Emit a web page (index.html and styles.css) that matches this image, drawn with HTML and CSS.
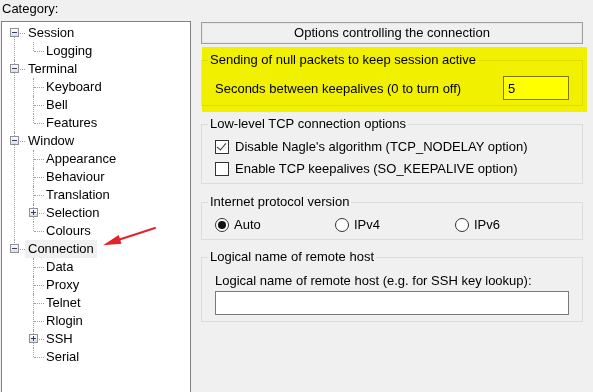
FILE: index.html
```html
<!DOCTYPE html>
<html lang="en">
<head>
    <meta charset="UTF-8">
    <title>Connection settings</title>
    <link rel="stylesheet" href="styles.css">
</head>
<body>
    <div class="left">
        <div class="cat-label">Category:</div>
        <div class="tree-box">
            <ul class="tree">
                <li><span class="toggle"></span><span class="label">Session</span>
                    <ul>
                        <li><span class="label">Logging</span></li>
                    </ul>
                </li>
                <li><span class="toggle"></span><span class="label">Terminal</span>
                    <ul>
                        <li><span class="label">Keyboard</span></li>
                        <li><span class="label">Bell</span></li>
                        <li><span class="label">Features</span></li>
                    </ul>
                </li>
                <li><span class="toggle"></span><span class="label">Window</span>
                    <ul>
                        <li><span class="label">Appearance</span></li>
                        <li><span class="label">Behaviour</span></li>
                        <li><span class="label">Translation</span></li>
                        <li><span class="toggle plus"></span><span class="label">Selection</span></li>
                        <li><span class="label">Colours</span></li>
                    </ul>
                </li>
                <li><span class="toggle"></span><span class="label selected">Connection</span>
                    <ul>
                        <li><span class="label">Data</span></li>
                        <li><span class="label">Proxy</span></li>
                        <li><span class="label">Telnet</span></li>
                        <li><span class="label">Rlogin</span></li>
                        <li><span class="toggle plus"></span><span class="label">SSH</span></li>
                        <li><span class="label">Serial</span></li>
                    </ul>
                </li>
            </ul>
        </div>
    </div>

    <div class="right">
        <div class="header">Options controlling the connection</div>

        <fieldset class="group first">
            <legend>Sending of null packets to keep session active</legend>
            <div class="group-body row">
                <span>Seconds between keepalives (0 to turn off)</span>
                <input class="small-input" type="text" value="5">
            </div>
        </fieldset>

        <fieldset class="group">
            <legend>Low-level TCP connection options</legend>
            <div class="group-body checks">
                <label class="check"><span class="box checked"></span>Disable Nagle's algorithm (TCP_NODELAY option)</label>
                <label class="check"><span class="box"></span>Enable TCP keepalives (SO_KEEPALIVE option)</label>
            </div>
        </fieldset>

        <fieldset class="group">
            <legend>Internet protocol version</legend>
            <div class="group-body radios">
                <label class="radio"><span class="dot on"></span>Auto</label>
                <label class="radio"><span class="dot"></span>IPv4</label>
                <label class="radio"><span class="dot"></span>IPv6</label>
            </div>
        </fieldset>

        <fieldset class="group last">
            <legend>Logical name of remote host</legend>
            <div class="group-body">
                <div class="field-label">Logical name of remote host (e.g. for SSH key lookup):</div>
                <input class="wide-input" type="text">
            </div>
        </fieldset>
    </div>

    <div class="highlight"></div>

    <svg class="arrow" width="593" height="392" viewBox="0 0 593 392">
        <line x1="155" y1="228" x2="118" y2="240" stroke="#e4222a" stroke-width="2" stroke-linecap="round"/>
        <polygon points="103,245.3 121.5,243.7 118.7,235.1" fill="#e4222a"/>
    </svg>
</body>
</html>
```

FILE: styles.css
```css
html, body {
    background: #f0f0f0;
}
body {
    margin: 0;
    height: 392px;
    overflow: hidden;
    display: flex;
    font-family: "Liberation Sans", Arial, sans-serif;
    font-size: 13px;
    color: #000;
}
.left {
    width: 190px;
    margin-left: 1px;
}
.cat-label {
    padding: 1px 0 0 1px;
    line-height: 16px;
    margin-bottom: 4px;
}
.tree-box {
    height: 380px;
    border: 1px solid #828282;
    background: #fff;
    box-sizing: border-box;
}

/* tree */
.tree, .tree ul {
    list-style: none;
    margin: 0;
    padding: 0;
}
.tree {
    padding-top: 2px;
}
.tree li {
    position: relative;
    line-height: 18px;
}
.tree > li {
    padding-left: 23px;
}
.tree ul > li {
    padding-left: 18px;
}
.tree li::before {
    content: "";
    position: absolute;
    top: 0;
    bottom: 0;
    border-left: 1px dotted #a0a0a0;
}
.tree li::after {
    content: "";
    position: absolute;
    top: 9px;
    width: 10px;
    border-top: 1px dotted #a0a0a0;
}
.tree > li::before { left: 12px; }
.tree > li::after { left: 13px; }
.tree > li:first-child::before { top: 9px; }
.tree > li:last-child::before { bottom: auto; height: 9px; }
.tree ul > li::before { left: 8px; }
.tree ul > li::after { left: 9px; width: 10px; }
.tree ul > li:last-child::before { bottom: auto; height: 9px; }

.label {
    display: inline-block;
    height: 18px;
    padding: 0 3px;
    white-space: nowrap;
}
.label.selected {
    background: #f0f0f0;
}

.toggle {
    position: absolute;
    top: 4px;
    left: 8px;
    width: 7px;
    height: 7px;
    border: 1px solid #919191;
    background: linear-gradient(#ffffff, #dedede);
    z-index: 1;
}
.tree ul .toggle {
    left: 4px;
}
.toggle::before {
    content: "";
    position: absolute;
    left: 1px;
    top: 3px;
    width: 5px;
    height: 1px;
    background: #2c3e74;
}
.toggle.plus::after {
    content: "";
    position: absolute;
    left: 3px;
    top: 1px;
    width: 1px;
    height: 5px;
    background: #2c3e74;
}

/* options panel */
.right {
    width: 382px;
    margin-left: 10px;
    padding-top: 22px;
}
.header {
    height: 20px;
    line-height: 20px;
    text-align: center;
    border: 1px solid #a0a0a0;
    box-shadow: inset 0 0 0 1px #e6e6e6;
}
.group {
    margin: 10px 0 0;
    padding: 0;
    border: 1px solid #dcdcdc;
    min-width: 0;
}
.group.first {
    margin-top: 8px;
}
.group.last {
    margin-top: 9px;
}
.group legend {
    margin-left: 6px;
    padding: 0 2px;
    line-height: 16px;
}
.group-body {
    padding: 7px 13px 6px;
}
.row {
    display: flex;
    justify-content: space-between;
    align-items: center;
    padding-top: 8px;
    padding-bottom: 5px;
}
.small-input {
    width: 66px;
    height: 24px;
    box-sizing: border-box;
    border: 1px solid #7a7a7a;
    background: #fff;
    font: inherit;
    padding: 0 4px;
    margin: 0;
}
.checks {
    display: flex;
    flex-direction: column;
    gap: 6px;
}
.check, .radio {
    display: flex;
    align-items: center;
    line-height: 16px;
    gap: 6px;
}
.box {
    width: 12px;
    height: 12px;
    border: 1px solid #333;
    background: #fff;
    position: relative;
}
.box.checked::after {
    content: "";
    position: absolute;
    left: 3px;
    top: 0px;
    width: 4px;
    height: 8px;
    border: solid #333;
    border-width: 0 1px 1px 0;
    transform: rotate(40deg);
}
.radios {
    display: grid;
    grid-template-columns: 120px 120px 120px;
}
.radio {
    gap: 5px;
}
.dot {
    width: 12px;
    height: 12px;
    border: 1px solid #333;
    border-radius: 50%;
    background: #fff;
    position: relative;
}
.dot.on::after {
    content: "";
    position: absolute;
    left: 2px;
    top: 2px;
    width: 8px;
    height: 8px;
    border-radius: 50%;
    background: #111;
}
.group.last .group-body {
    padding-top: 8px;
}
.field-label {
    line-height: 16px;
    margin-bottom: 2px;
}
.wide-input {
    display: block;
    width: 354px;
    height: 24px;
    box-sizing: border-box;
    border: 1px solid #7a7a7a;
    background: #fff;
    margin: 0;
}

/* annotations drawn over the dialog */
.highlight {
    position: absolute;
    left: 202px;
    top: 47px;
    width: 385px;
    height: 65px;
    background: #ffff00;
    mix-blend-mode: multiply;
    pointer-events: none;
}
.arrow {
    position: absolute;
    left: 0;
    top: 0;
    pointer-events: none;
}
```
